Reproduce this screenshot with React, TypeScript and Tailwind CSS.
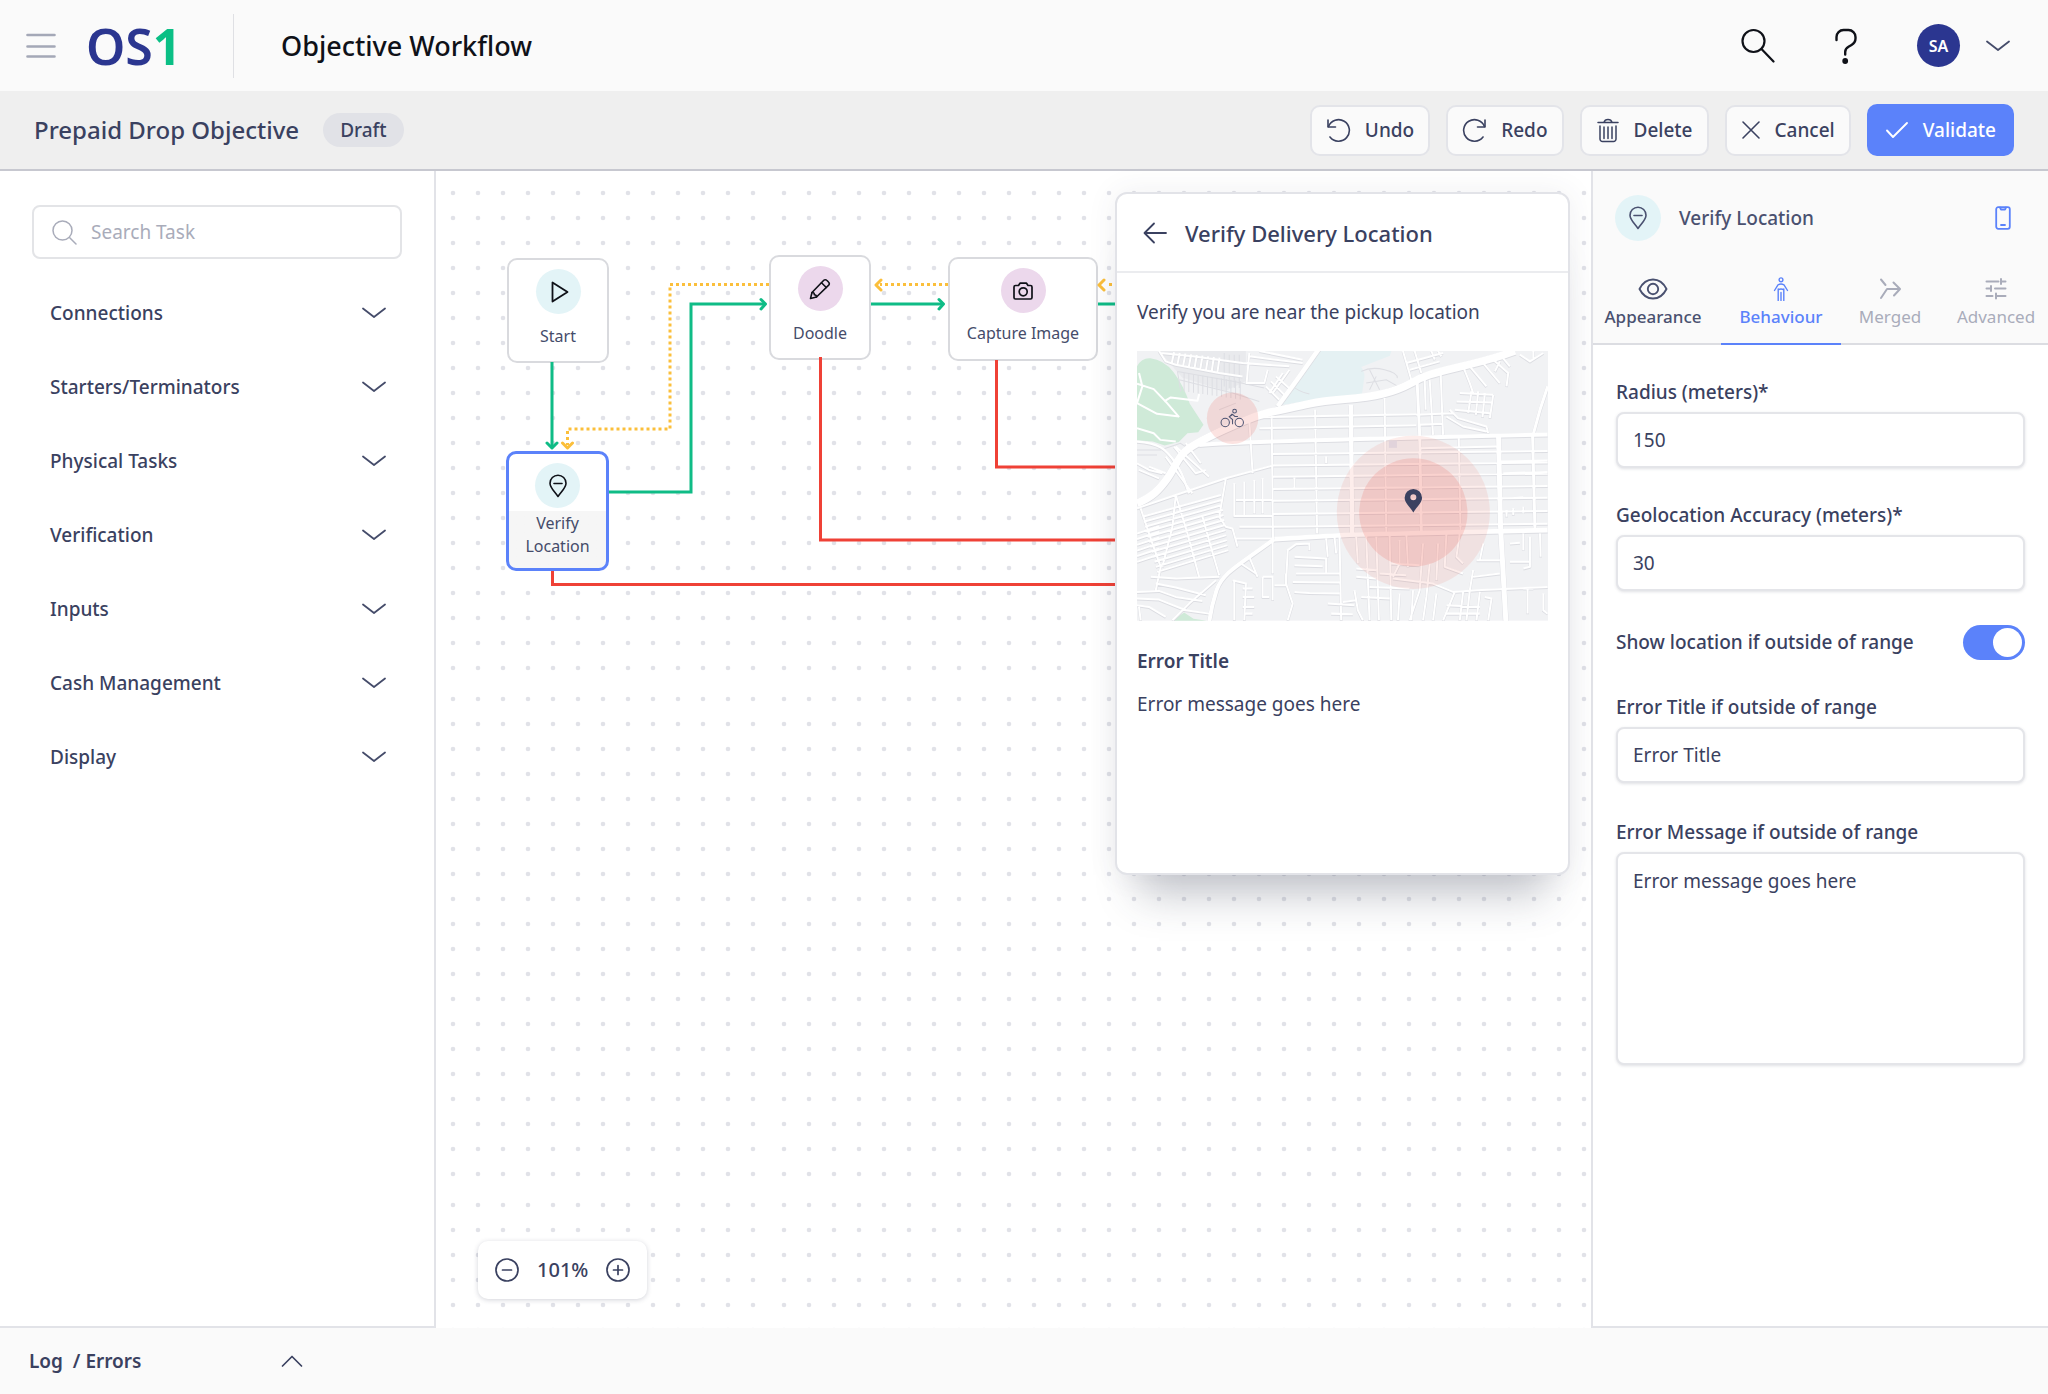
import { useState } from "react";
import type { ReactNode } from "react";

const TASK_GROUPS = [
  "Connections",
  "Starters/Terminators",
  "Physical Tasks",
  "Verification",
  "Inputs",
  "Cash Management",
  "Display",
];

type IconProps = {
  w: number;
  h: number;
  stroke?: number;
  className?: string;
  children: ReactNode;
};

function Icon({ w, h, stroke = 1.6, className = "", children }: IconProps) {
  return (
    <svg
      width={w}
      height={h}
      viewBox={`0 0 ${w} ${h}`}
      fill="none"
      stroke="currentColor"
      strokeWidth={stroke}
      strokeLinecap="round"
      strokeLinejoin="round"
      className={`shrink-0 ${className}`}
      aria-hidden="true"
    >
      {children}
    </svg>
  );
}

function ChevronDown() {
  return (
    <Icon w={24} h={14} stroke={1.8} className="text-[#454c6a]">
      <path d="M1 2.5 12 11 23 2.5" />
    </Icon>
  );
}

function PinIcon() {
  return (
    <Icon w={20} h={24}>
      <path d="M10 22.5C6 17 2 13.5 2 9.2a8 8 0 0 1 16 0c0 4.3-4 7.800-8 13.3z" />
      <path d="M6 9.500h8" />
    </Icon>
  );
}

function Header() {
  return (
    <header className="flex h-[91px] items-center bg-[#fafafa] pl-[26px] pr-[38px]">
      <button aria-label="Menu" className="mr-[30px] text-[#a4a8b7]">
        <Icon w={30} h={26} stroke={2.6}>
          <path d="M1.5 2h27M1.5 13.500h27M1.5 23.500h27" />
        </Icon>
      </button>
      <a
        href="#"
        aria-label="OS1"
        className="w-[147px] text-[50px] leading-[60px] font-semibold text-[#2b3690]"
      >
        OS<span className="font-bold text-[#0abf85]">1</span>
      </a>
      <div className="h-16 w-px bg-[#dfe0e4]" />
      <h1 className="ml-[47px] text-[27px] leading-8 font-medium text-[#0f1118]">
        Objective Workflow
      </h1>
      <div className="ml-auto flex items-center">
        <button aria-label="Search" className="mr-[60px] text-[#0f1118]">
          <Icon w={34} h={35} stroke={2.2}>
            <circle cx="12.5" cy="13" r="11" />
            <path d="M20.5 21 32.5 33.5" />
          </Icon>
        </button>
        <button aria-label="Help" className="mr-[60px] text-[#0f1118]">
          <Icon w={22} h={36} stroke={2.4}>
            <path d="M1.5 12V9a7 7 0 0 1 7-7h5a7 7 0 0 1 7 7v1.500c0 3-1.5 5-4 6.500l-3 1.800c-2.2 1.3-3.3 2.800-3.300 5.200v2.500" />
            <circle cx="10.2" cy="33" r="1.7" fill="currentColor" />
          </Icon>
        </button>
        <button aria-label="Account" className="flex items-center gap-[26px]">
          <span className="flex size-[43px] items-center justify-center rounded-full bg-[#2b3690] text-base font-semibold text-white">
            SA
          </span>
          <ChevronDown />
        </button>
      </div>
    </header>
  );
}

function ToolButton({ icon, label }: { icon: ReactNode; label: string }) {
  return (
    <button className="flex h-[51px] items-center gap-[14px] rounded-[10px] border-2 border-[#e3e4e9] bg-[#fafafa] px-[14px] text-[19px] font-medium">
      {icon}
      {label}
    </button>
  );
}

function Toolbar() {
  return (
    <div className="flex h-20 items-center border-b-2 border-[#c7c8d0] bg-[#efefef] px-[34px] text-[#3a4160]">
      <h2 className="text-[24px] leading-8 font-medium">
        Prepaid Drop Objective
      </h2>
      <span className="ml-6 flex h-[34px] items-center rounded-full bg-[#e1e2e7] px-[17px] text-[19px] font-medium">
        Draft
      </span>
      <div className="ml-auto flex items-center gap-4">
        <ToolButton
          label="Undo"
          icon={
            <Icon w={25} h={25}>
              <path d="M2 2v7h7.500" />
              <path d="M2.5 8.500A10.800 10.800 0 1 1 4 19" />
            </Icon>
          }
        />
        <ToolButton
          label="Redo"
          icon={
            <Icon w={25} h={25}>
              <path d="M23 2v7h-7.500" />
              <path d="M22.5 8.500A10.800 10.800 0 1 0 21 19" />
            </Icon>
          }
        />
        <ToolButton
          label="Delete"
          icon={
            <Icon w={24} h={25} stroke={1.5}>
              <path d="M2 4.500h20M8 4.300C8.500 2.500 10 1.500 12 1.500s3.500 1 4 2.800M4 8v13a2.500 2.500 0 0 0 2.500 2.500h11A2.500 2.500 0 0 0 20 21V8M8 9v11.500M12 9v11.500M16 9v11.500" />
            </Icon>
          }
        />
        <ToolButton
          label="Cancel"
          icon={
            <Icon w={20} h={20}>
              <path d="M2 2l16 16M18 2 2 18" />
            </Icon>
          }
        />
        <button className="flex h-[52px] items-center gap-[14px] rounded-[10px] bg-[#5b82fa] px-[18px] text-[19px] font-medium text-white">
          <Icon w={24} h={18} stroke={1.9}>
            <path d="M2 9.500 8 16 22 2" />
          </Icon>
          Validate
        </button>
      </div>
    </div>
  );
}

function TaskSidebar() {
  return (
    <aside className="w-[436px] shrink-0 border-r-2 border-b-2 border-[#e2e3e8] bg-white px-8 pt-[34px]">
      <label className="flex h-[54px] items-center gap-[14px] rounded-lg border-2 border-[#e3e4e7] px-[18px] text-[#a9acba]">
        <Icon w={25} h={25} stroke={1.5}>
          <circle cx="10.5" cy="10.5" r="9.5" />
          <path d="M17.5 17.500 24 24" />
        </Icon>
        <input
          type="search"
          aria-label="Search Task"
          placeholder="Search Task"
          className="w-full min-w-0 bg-transparent text-[19px] outline-none placeholder:text-[#a9acba]"
        />
      </label>
      <ul className="mt-[17px]">
        {TASK_GROUPS.map((group) => (
          <li key={group}>
            <button className="flex h-[74px] w-full items-center justify-between pr-4 pl-[18px] text-[19px] font-medium text-[#3a4160]">
              {group}
              <ChevronDown />
            </button>
          </li>
        ))}
      </ul>
    </aside>
  );
}

function DotGrid() {
  const columns = [
    { x: 5, w: 325 },
    { x: 336, w: 2500 },
  ];
  const rows = [10, 516, 1022];
  return (
    <svg className="absolute inset-0 h-full w-full" aria-hidden="true">
      <defs>
        <pattern id="dots" width="25" height="25" patternUnits="userSpaceOnUse">
          <circle cx="12" cy="12" r="2.300" fill="#e1e2e8" />
        </pattern>
      </defs>
      {rows.map((y) =>
        columns.map((c) => (
          <g key={`${c.x}-${y}`} transform={`translate(${c.x} ${y})`}>
            <rect width={c.w} height="500" fill="url(#dots)" />
          </g>
        ))
      )}
    </svg>
  );
}

// Connectors between the nodes, in canvas coordinates
function Wires() {
  return (
    <svg
      className="absolute top-0 left-0"
      width="760"
      height="430"
      fill="none"
      strokeWidth="3"
      aria-hidden="true"
    >
      <g stroke="#ef4136">
        <path d="M384.5 186v183H760" />
        <path d="M560.5 189v107H760" />
        <path d="M116.5 400v13.500H760" />
      </g>
      <g stroke="#0fbc86">
        <path d="M116 191v85M173 321h82V133h73M435 133h71M662 133h98" />
        <path
          d="M111 272l5 5 5-5M325 128.500l4.500 4.500-4.500 5M503 128.500l4.500 4.500-4.500 5"
          strokeLinecap="round"
          strokeLinejoin="round"
        />
      </g>
      <g stroke="#fbbf3b">
        <path
          d="M333 113.500H234V258H131.500v16M512 113.500h-68M700 113.500h-30"
          strokeDasharray="3 3"
        />
        <path
          d="M126.5 272l5 5 5-5M445 109l-5 5 5 5M668 109l-5 5 5 5"
          strokeLinecap="round"
          strokeLinejoin="round"
        />
      </g>
    </svg>
  );
}

type NodeProps = {
  place: string;
  tint: string;
  label: string;
  icon: ReactNode;
};

function FlowNode({ place, tint, label, icon }: NodeProps) {
  return (
    <button
      className={`absolute flex flex-col items-center rounded-[10px] bg-white pt-[9px] text-base text-[#454c6a] ${place}`}
    >
      <span
        className={`flex size-[45px] shrink-0 items-center justify-center rounded-full text-[#0f1118] ${tint}`}
      >
        {icon}
      </span>
      <span className="leading-[23px]">{label}</span>
    </button>
  );
}

const range = (n: number) => Array.from({ length: n }, (_, i) => i);

const MINOR_ROADS = [
  // street grid, centre and east
  ...[712, 745, 822, 857, 890, 927, 962, 1002, 1040].map(
    (y) => `M${y < 800 ? 450 : 490} ${y}L${y < 800 ? 920 : 1313} ${y - 9}`
  ),
  "M920 705 1030 700M930 735 1000 732M930 805 1165 800M1165 845 1313 842M1180 880 1313 876",
  "M617 690 623 1060M825 655 830 1060M1047 775 1052 1050M487 715 491 1075M420 720 430 880",
  "M960 600 970 765M993 585 1000 765M945 600 948 690",
  "M555 890V925M650 850V830M375 910V1010M405 905V1010M435 900V1000M460 895V1000M380 960H490M375 1008H490M390 1040H490M380 1075H490",
  // west, fan of slanted blocks
  "M84 985 200 945 350 895 490 857M200 945 235 1060 270 1190M95 985 130 1090 155 1160 140 1230M280 1010 305 1100 330 1185M350 895 330 1010 350 1040 370 1045 385 1100M200 945 190 1040 160 1160",
  ...range(12).map((i) => `M${100 + i * 4} ${1010 + i * 15}L${335 + i * 2} ${945 + i * 15}`),
  ...range(6).map((i) => `M84 ${1060 + i * 17}L150 ${1038 + i * 17}`),
  "M84 1235 150 1232 200 1250 280 1262M84 1255 150 1258 230 1290 300 1300M84 1275 120 1280 170 1310M125 1190 200 1195 330 1190M140 1210 200 1222 290 1245M190 1320 240 1270 320 1200M90 1280 95 1320",
  "M90 870 150 895M84 850 120 870 160 880M170 830 250 940M195 800 260 880 290 870M200 800 300 890M230 790 275 850M120 860 170 880",
  // north-west
  "M150 514 170 545 200 555 330 580 400 590M155 520 250 530 400 550 540 560M420 530 580 550M450 514 580 540M420 520 412 610H465L475 570",
  ...range(9).map((i) => `M${195 + i * 17} ${518 + i * 2}L${188 + i * 17} ${550 + i * 4}`),
  "M470 620 510 660M485 605 525 645M500 590 545 630M540 570 490 640M520 580 480 640",
  // north-east
  "M880 514 905 600M915 514 935 580M890 550 1000 520M900 570 990 545M965 514 975 540M985 514 995 530M1060 560 1080 610 1090 640M1040 560 1120 550 1170 610M1080 560 1130 620M1150 540 1195 580 1190 620M1175 530 1200 560M1170 545 1155 575M1230 525 1260 545 1300 520M1270 514V540",
  "M1050 640 1150 645M1040 665 1148 668M1035 690 1140 700M1020 690 1045 715 1130 740 1135 760M1010 710 1060 740 1130 755M1085 635 1075 700M1105 635 1098 705M1125 640 1118 712M1150 645 1140 715",
  // south
  "M490 1075V1180M535 1320 550 1270 530 1210 535 1110 560 1092 600 1090V1110M555 1130 650 1135V1180M555 1155 640 1158M560 1180 690 1180M550 1205 690 1207M555 1235 600 1238 690 1240M495 1215 530 1215V1180M460 1190H490V1260M460 1190V1250H480M650 1075 655 1130M675 1070 680 1120",
  "M690 1070 695 1320M740 1070 745 1150M770 1065 775 1200 780 1320M800 1070 808 1320M840 1060 845 1320M740 1165 800 1170M740 1190 800 1195M735 1230 745 1290 760 1320M700 1265 740 1260M655 1270 735 1275M665 1300 730 1302M755 1250 840 1255M780 1220 900 1225M810 1180 890 1185",
  "M870 1080V1150L850 1190M890 1060 895 1160M940 1090 930 1230 900 1320M960 1150 950 1250 940 1320M985 1090 980 1200M1010 1060 1005 1160 1060 1180M1050 1060 1040 1130 1060 1150M845 1150 930 1155M850 1195 970 1210 1030 1235 1100 1230 1313 1220M1035 1235 1000 1320M1060 1235 1050 1320M1090 1170 1080 1230 1070 1320M1110 1235 1100 1320M1120 1090 1110 1140M1125 1250 1145 1255 1135 1320M1090 1190 1170 1180M1100 1140 1170 1140M870 1240 865 1320M910 1230 905 1320M980 1240 970 1320M1010 1275 1110 1280M1005 1300 1110 1300",
  "M370 1200 410 1210 405 1320M375 1200V1320M400 1225H430M400 1250H435M400 1280H435M405 1300H430M395 1150 440 1180M420 1130 445 1190",
  "M1240 1060V1110M1260 1070V1160L1240 1165M1200 1145H1260M1253 1225V1300M1240 1225H1270M1300 1240V1290L1313 1300M1290 1060 1292 1130",
  "M1190 990V1010M1210 985V1005M1240 1000V980M1210 955 1240 952M1200 1090 1230 1088",
];

const MAIN_ROADS: { d: string; w: number }[] = [
  { d: "M84 970C130 950 150 930 175 895S205 830 240 805 330 755 400 725 520 690 600 672 740 662 820 642 900 605 960 585 1120 550 1215 514", w: 23 },
  { d: "M505 680 570 590 630 505", w: 14 },
  { d: "M270 795C400 785 600 782 720 778S1100 768 1313 764", w: 12 },
  { d: "M724 675 728 1062", w: 13 },
  { d: "M1166 768 1172 1040 1188 1325", w: 15 },
  { d: "M495 1077 720 1064 1313 1050", w: 14 },
  { d: "M495 1077 420 1130C370 1165 335 1190 322 1230S305 1290 300 1325", w: 12 },
  { d: "M922 600 930 765 935 1055", w: 9 },
  { d: "M1313 620 1290 690 1268 770 1275 1050", w: 9 },
  { d: "M84 785C150 790 170 805 200 850S230 920 240 940", w: 7 },
];

function MapPreview() {
  return (
    <svg
      viewBox="84 514 1230 807"
      className="block w-full"
      fill="none"
      role="img"
      aria-label="Map of the pickup location"
    >
      <rect x="84" y="514" width="1230" height="807" fill="#f1f2f4" />
      <path d="M150 514h260v90l-60 30-130-40z" fill="#e9eaed" />
      <path
        d="M630 514h215l-4 14-86 34q14 20 8 40l-6 44-155 16-90 14z"
        fill="#e5f1f3"
      />
      <path
        d="M84 560q14-26 40-24 40 4 70 42 30 40 48 94l41 63-16 22-32 3-26 26-42 11-36-12-47-4z"
        fill="#cfead8"
      />
      <path d="M190 1321l35-24 28 18 40 6z" fill="#cfead8" />
      <g stroke="#dddee3" strokeWidth="3">
        <path d="M205 575l170 30 90 20M210 600l160 40 80 25M205 575l10 60" />
        {range(13).map((i) => (
          <path key={i} d={`M${225 + i * 14} ${580 + i * 2}v55`} />
        ))}
        <path d="M345 520v100M360 525v100M375 525v100M390 525v100" />
        <path d="M755 575q30-15 70-5t38 25M780 570l30 60M800 590l-20 40M770 610l60-10 35 20M545 615q20 20 55 28" />
        <path d="M84 810h70l60-20 15 10M84 825h60M330 690l50-20" />
      </g>
      {/* casing first, then the white carriageway */}
      <g stroke="#dcdde2" strokeLinejoin="round" transform="translate(0 2)">
        <path d={MINOR_ROADS.join("")} strokeWidth="8" />
        {MAIN_ROADS.map((r) => (
          <path key={r.d} d={r.d} strokeWidth={r.w + 2} />
        ))}
      </g>
      <g stroke="#fff" strokeLinejoin="round">
        <path d={MINOR_ROADS.join("")} strokeWidth="6" />
        <path
          d="M84 612l50 16 40 42 36 42M90 580l10 40-16 50 60 32 66 8M165 665l20-12 80 10 5-20M84 745l50 15 20 20 46 5"
          strokeWidth="6"
        />
        {MAIN_ROADS.map((r) => (
          <path key={r.d} d={r.d} strokeWidth={r.w} />
        ))}
      </g>
      <path d="M838 782h24v22h-24z" fill="#e0e2ee" />
      <circle cx="370" cy="715" r="77" fill="#ef5a4c" fillOpacity=".17" />
      <circle cx="911" cy="997" r="229" fill="#ef5a4c" fillOpacity=".11" />
      <circle cx="911" cy="997" r="162" fill="#ef5a4c" fillOpacity=".18" />
      <path
        d="M911 997c-9-16-26-28-26-44a26 26 0 0 1 52 0c0 16-17 28-26 44zm0-54a9 9 0 1 0 0 18 9 9 0 0 0 0-18z"
        fill="#3b4160"
        fillRule="evenodd"
      />
      <g stroke="#4a5170" strokeWidth="3">
        <circle cx="348" cy="728" r="12.5" />
        <circle cx="390" cy="728" r="12.5" />
        <circle cx="376" cy="694" r="5.5" />
        <path d="M386 710h-9l-7-6-10 7 10 8v14M360 711l9-9" />
      </g>
    </svg>
  );
}

function PhonePreview() {
  return (
    <section className="absolute top-[21px] right-[21px] min-h-[683px] w-[455px] rounded-[12px] border-2 border-[#e2e3e8] bg-white text-[#3a4160] shadow-[0_0_30px_rgba(60,66,90,0.08),0_44px_40px_-24px_rgba(50,56,80,0.28)]">
      <div className="flex h-[79px] items-center gap-[18px] border-b-2 border-[#ebecef] pl-[26px]">
        <button aria-label="Back">
          <Icon w={24} h={22} stroke={1.8}>
            <path d="M23 11H2M11 1.500 1.500 11 11 20.500" />
          </Icon>
        </button>
        <h3 className="text-[22px] leading-8 font-medium">
          Verify Delivery Location
        </h3>
      </div>
      <div className="px-5 text-[19px] leading-[26px]">
        <p className="mt-[26px] mb-[26px]">
          Verify you are near the pickup location
        </p>
        <MapPreview />
        <p className="mt-[27px] font-semibold">Error Title</p>
        <p className="mt-[17px]">Error message goes here</p>
      </div>
    </section>
  );
}

function Canvas() {
  const [zoom, setZoom] = useState(101);
  return (
    <main className="relative z-10 min-w-0 flex-1">
      <DotGrid />
      <FlowNode
        place="left-[71px] top-[87px] h-[105px] w-[102px] gap-[11px] border-2 border-[#d9dade]"
        tint="bg-[#e3f4f7]"
        label="Start"
        icon={
          <Icon w={20} h={22} stroke={1.8} className="ml-1">
            <path d="M2.5 1.500v19L17.5 11z" />
          </Icon>
        }
      />
      <FlowNode
        place="left-[333px] top-[84px] h-[105px] w-[102px] gap-[11px] border-2 border-[#d9dade]"
        tint="bg-[#ecd8ec]"
        label="Doodle"
        icon={
          <Icon w={22} h={22} stroke={1.6}>
            <path d="M1.5 20.500 3 14.500 14.800 2.300a2 2 0 0 1 2.900 0L19.700 4.300a2 2 0 0 1 0 2.900L7.500 19z" />
            <path d="M12.5 4.800 17.300 9.500M3 14.500c1.800 0 2.400.6 2.300 2.200 1.600 0 2.200.6 2.200 2.300" />
          </Icon>
        }
      />
      <FlowNode
        place="left-[512px] top-[86px] h-[104px] w-[150px] gap-[9px] border-2 border-[#d9dade]"
        tint="bg-[#ecd8ec]"
        label="Capture Image"
        icon={
          <Icon w={20} h={18} stroke={1.7}>
            <path d="M2.5 3.500h3L7 1.200h6.500L15 3.500h2.500A1.500 1.500 0 0 1 19 5v10.500a1.500 1.500 0 0 1-1.500 1.500h-15A1.500 1.500 0 0 1 1 15.500V5a1.500 1.500 0 0 1 1.500-1.500z" />
            <circle cx="10.2" cy="9.800" r="4" />
          </Icon>
        }
      />
      <FlowNode
        place="left-[70px] top-[280px] h-[120px] w-[103px] gap-1 border-3 border-[#5b82fa] bg-linear-to-b from-white from-50% to-[#f6f6f6] to-50% px-2"
        tint="bg-[#e3f4f7]"
        label="Verify Location"
        icon={<PinIcon />}
      />
      <Wires />
      <PhonePreview />
      <div className="absolute bottom-[29px] left-[42px] flex h-[58px] items-center gap-[18px] rounded-[10px] bg-white px-[17px] text-[#3a4160] shadow-[0_1px_5px_rgba(50,56,80,0.22)]">
        <button aria-label="Zoom out" onClick={() => setZoom(zoom - 1)}>
          <Icon w={24} h={24} stroke={1.7}>
            <circle cx="12" cy="12" r="11" />
            <path d="M7.5 12h9" />
          </Icon>
        </button>
        <span className="text-[20px] font-medium">{zoom}%</span>
        <button aria-label="Zoom in" onClick={() => setZoom(zoom + 1)}>
          <Icon w={24} h={24} stroke={1.7}>
            <circle cx="12" cy="12" r="11" />
            <path d="M7.5 12h9M12 7.500v9" />
          </Icon>
        </button>
      </div>
    </main>
  );
}

const fieldClass =
  "block w-full rounded-lg border-2 border-[#e4e5e9] bg-white px-[15px] text-[19px] shadow-[0_1px_3px_rgba(50,56,80,0.15)] outline-none";

const labelClass = "block h-[33px] leading-[26px] font-medium";

function Field({ id, label, value }: { id: string; label: string; value: string }) {
  return (
    <div>
      <label htmlFor={id} className={labelClass}>
        {label}
      </label>
      <input id={id} defaultValue={value} className={`h-[56px] ${fieldClass}`} />
    </div>
  );
}

function PropertiesPanel() {
  const tab = "flex flex-col items-center gap-1 text-[17px] leading-6";
  return (
    <aside className="w-[457px] shrink-0 border-b-2 border-l-2 border-[#e2e3e8] bg-white text-[#3a4160]">
      <div className="border-b-2 border-[#dcdde2] bg-[#fafafa]">
        <div className="flex items-center pt-6 pr-[37px] pl-[22px] text-[#4a5170]">
          <span className="flex size-[46px] items-center justify-center rounded-full bg-[#e3f4f7]">
            <PinIcon />
          </span>
          <h3 className="ml-[18px] text-[19px] font-medium">Verify Location</h3>
          <button aria-label="Preview on device" className="ml-auto text-[#5b82fa]">
            <Icon w={16} h={24} stroke={1.8}>
              <rect x="1.2" y="1.2" width="13.600" height="21.600" rx="2" />
              <path d="M5 1.500 6 3.500h4l1-2M6 19h4" />
            </Icon>
          </button>
        </div>
        <div
          role="tablist"
          className="-mb-[2px] grid h-[104px] grid-cols-[128fr_120fr_98fr_109fr] pt-9"
        >
          <button role="tab" className={`${tab} pr-2 font-medium text-[#4a5170]`}>
            <Icon w={30} h={24} stroke={1.9}>
              <path d="M1.5 12C4.500 6 9 2.500 15 2.500S25.500 6 28.500 12C25.500 18 21 21.500 15 21.500S4.500 18 1.500 12z" />
              <circle cx="15" cy="12" r="5.200" />
            </Icon>
            Appearance
          </button>
          <button
            role="tab"
            aria-selected="true"
            className={`${tab} border-b-2 border-[#5b82fa] font-medium text-[#5b82fa]`}
          >
            <Icon w={16} h={24} stroke={1.4}>
              <circle cx="8" cy="2.800" r="1.900" />
              <path d="M1.5 13.500 5 7.800Q8 6.300 11 7.800l3.500 5.700M5.200 12v11.500M10.800 12v11.500M8 15.500v8M5.500 12.500Q8 11.500 10.500 12.500" />
            </Icon>
            Behaviour
          </button>
          <button role="tab" className={`${tab} text-[#a9acba]`}>
            <Icon w={24} h={24} stroke={2}>
              <path d="M3 2.500 7.500 8M3 21 9 12H21.500M15.500 5.500 22 12l-6 6.500" />
            </Icon>
            Merged
          </button>
          <button role="tab" className={`${tab} pl-[5px] text-[#a9acba]`}>
            <Icon w={22} h={24} stroke={2}>
              <path d="M1.5 4.500h12M16 2v5M16 4.500h4.500M1.500 11.500h4.500M6 9v5M10 11.500h10.500M1.500 19h6M11 16.500v5M11 19h9.500" />
            </Icon>
            Advanced
          </button>
        </div>
      </div>
      <form className="px-[23px] pt-[34px] text-[19px]">
        <Field id="radius" label="Radius (meters)*" value="150" />
        <div className="mt-[34px]">
          <Field id="accuracy" label="Geolocation Accuracy (meters)*" value="30" />
        </div>
        <div className="mt-[34px] flex items-center justify-between font-medium">
          <label htmlFor="show">Show location if outside of range</label>
          <input
            id="show"
            type="checkbox"
            role="switch"
            defaultChecked
            className="flex h-[35px] w-[62px] appearance-none items-center rounded-full bg-[#c7c8d0] px-[3px] before:size-[29px] before:rounded-full before:bg-white checked:justify-end checked:bg-[#5b82fa]"
          />
        </div>
        <div className="mt-[34px]">
          <Field id="error-title" label="Error Title if outside of range" value="Error Title" />
        </div>
        <div className="mt-9">
          <label htmlFor="error-message" className={labelClass}>
            Error Message if outside of range
          </label>
          <textarea
            id="error-message"
            defaultValue="Error message goes here"
            className={`h-[213px] resize-none pt-[14px] leading-[26px] ${fieldClass}`}
          />
        </div>
      </form>
    </aside>
  );
}

export default function App() {
  return (
    <div className="flex min-h-screen flex-col bg-white font-['Noto_Sans',sans-serif]">
      <Header />
      <Toolbar />
      <div className="flex flex-1">
        <TaskSidebar />
        <Canvas />
        <PropertiesPanel />
      </div>
      <footer className="flex h-[66px] items-center bg-[#fafafa] pl-[29px] text-[#3a4160]">
        <button className="flex w-[274px] items-center justify-between text-[19px] font-semibold">
          <span className="whitespace-pre">Log  / Errors</span>
          <Icon w={22} h={14} stroke={1.7}>
            <path d="M1.5 12 11 2.500 20.500 12" />
          </Icon>
        </button>
      </footer>
    </div>
  );
}
